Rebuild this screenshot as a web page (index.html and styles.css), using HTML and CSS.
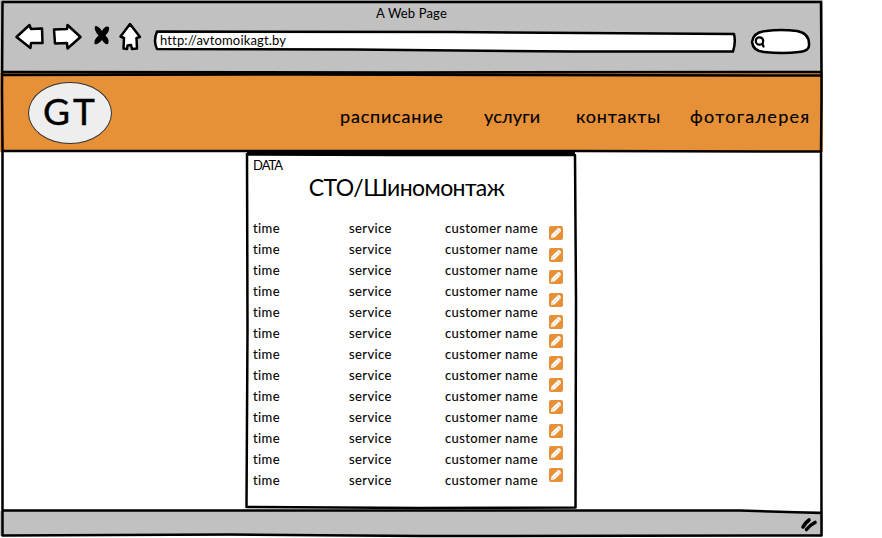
FILE: index.html
```html
<!DOCTYPE html>
<html lang="ru">
<head>
<meta charset="utf-8">
<title>A Web Page</title>
<link rel="stylesheet" href="styles.css">
</head>
<body>
<div class="window">
  <header class="chrome">
    <div class="title">A Web Page</div>
    <div class="toolbar">
      <svg class="tools" width="130" height="34" viewBox="0 0 130 34">
        <g class="ink paper">
          <path d="M2.500 15 L15.500 3 L17 7 L28 6.500 L28.500 21 L17 21 L16.500 26 Z"/>
          <path d="M66.500 15 L53.500 3 L53 7 L40 7.500 L41 21.500 L53 21 L53.500 26.500 Z"/>
          <path d="M116 2 L106.500 14.500 L110 16 L109.500 26.500 L113 27 L113.500 23.500 L117 23 L118 27 L123 26.500 L122.500 16 L126 15 Z"/>
        </g>
        <path class="blob" d="M81 4 Q85 4 88 9 Q91 3 95 5 Q96 9 91.500 13.500 Q96 18 94 22 Q91 23 88 18 Q84 23 80.500 22 Q79.500 18 84.500 13.500 Q79.500 8 81 4Z"/>
      </svg>
      <div class="address">
        <svg class="shape" width="584" height="24" viewBox="0 0 584 24"><path class="ink paper" d="M4 2.500 L300 3 L581 5 Q583 13 580 22.500 L420 22.500 L200 20.500 L4 20 Q0 12 4 2.500Z"/></svg>
        <span class="url">http://avtomoikagt.by</span>
      </div>
      <svg class="search" width="62" height="28" viewBox="0 0 62 28">
        <path class="ink paper" d="M3 15 Q4 5 17 4 Q32 2 48 4 Q60 6 60 17 Q61 24 50 25 Q34 27 15 25 Q4 24 3 15Z"/>
        <circle class="lens" cx="10.500" cy="14" r="3.700"/>
        <path class="lens" d="M13.500 17 L14.500 19.500"/>
      </svg>
    </div>
  </header>

  <nav class="nav">
    <div class="logo"><span>GT</span></div>
    <span class="link schedule">расписание</span>
    <span class="link services">услуги</span>
    <span class="link contacts">контакты</span>
    <span class="link gallery">фотогалерея</span>
  </nav>

  <main class="page">
    <section class="card">
      <div class="label">DATA</div>
      <h1>СТО/Шиномонтаж</h1>
      <div class="schedule-list">
        <div class="rows" id="rows"></div>
        <div class="edits" id="edits"></div>
      </div>
    </section>
  </main>

  <footer class="status">
    <svg width="18" height="16" viewBox="0 0 18 16"><path class="grip" d="M3 10 Q5 6 9 3 M6.500 12.500 Q10 8 15 5.500"/></svg>
  </footer>

  <svg class="frame" width="826" height="538" viewBox="0 0 826 538">
    <path class="line" d="M2.500 2 L821 2 L821.500 75 L821.500 100 L821 152 L821.500 535.500 L420 536 L230 534.500 L2.500 535.500 L2.500 150 L2 90 Z"/>
    <path class="line" d="M2 72 L400 72.500 L821 72 M2 75 L300 74.500 L821 75.500"/>
    <path class="line" d="M2 151 L260 151 L580 151 L821 151.500"/>
    <path class="line" d="M2 510.500 L270 510.500 L740 510.500 L821 513"/>
    <path class="line" d="M247 153 L247.500 330 L246.500 507 L420 508 L575.500 507.500 L576 300 L575 155 L400 155 L247 154.500 M247 153 L575 153"/>
  </svg>
</div>
<script src="script.js"></script>
</body>
</html>
```
FILE: styles.css
```css
body {
  margin: 0;
  background: #fff;
  color: #000;
  font-family: Lato, "Noto Sans", sans-serif;
  overflow: hidden;
}
.window {
  position: relative;
  display: flex;
  flex-direction: column;
  width: 823px;
  height: 538px;
}
.frame {
  position: absolute;
  inset: 0;
  pointer-events: none;
}
.line { fill: none; stroke: #000; stroke-width: 2.5; stroke-linejoin: round; }
.ink { stroke: #000; stroke-width: 2.5; stroke-linejoin: round; }
.paper { fill: #fff; }
.blob { fill: #000; }
.lens { fill: none; stroke: #000; stroke-width: 2.2; stroke-linecap: round; }
.grip { fill: none; stroke: #000; stroke-width: 3.6; stroke-linecap: round; }

.chrome {
  box-sizing: border-box;
  height: 73px;
  padding-top: 5px;
  background: #c1c1c1;
}
.title {
  height: 17px;
  line-height: 17px;
  font-size: 13px;
  text-align: center;
  letter-spacing: 0.15px;
}
.toolbar { display: flex; align-items: flex-start; padding-left: 14px; }
.tools { margin-right: 9px; }
.address { position: relative; width: 584px; height: 24px; margin-top: 7px; }
.shape { position: absolute; inset: 0; }
.url {
  position: relative;
  display: block;
  padding-left: 7px;
  line-height: 23px;
  font-size: 13px;
  letter-spacing: 0.15px;
}
.search { margin: 5px 0 0 12px; }

.nav {
  display: flex;
  box-sizing: border-box;
  height: 79px;
  padding: 9px 0 0 28px;
  background: #e69138;
}
.logo {
  box-sizing: border-box;
  width: 84px;
  height: 62px;
  border: 1.5px solid #333;
  border-radius: 50%;
  background: #eee;
  text-align: center;
  font-size: 37px;
  line-height: 55px;
  letter-spacing: 3px;
  -webkit-text-stroke: 0.4px #000;
}
.logo span { margin-right: -1px; }
.link {
  font-size: 18px;
  line-height: 26px;
  padding-top: 21px;
  white-space: nowrap;
  letter-spacing: 0.8px;
  -webkit-text-stroke: 0.15px #000;
}
.schedule { width: 144px; margin-left: 228px; }
.services { width: 92px; letter-spacing: 0.2px; }
.contacts { width: 114px; }
.gallery { letter-spacing: 1.3px; }

.page { height: 359px; display: flex; padding-left: 246px; }
.card { width: 330px; height: 357px; }
.label { padding: 5px 0 0 7px; font-size: 13px; line-height: 17px; letter-spacing: -1px; }
h1 {
  margin: -1px 0 17px;
  padding-right: 9px;
  text-align: center;
  font-size: 23px;
  line-height: 28px;
  font-weight: 400;
  letter-spacing: -0.6px;
}
.schedule-list { display: flex; padding-left: 7px; }
.rows { width: 296px; }
.row {
  display: grid;
  grid-template-columns: 96px 96px 1fr;
  height: 21px;
  line-height: 21px;
  font-size: 13px;
  letter-spacing: 0.4px;
  -webkit-text-stroke: 0.1px #000;
}
.edits { display: flex; flex-direction: column; gap: 8px; padding-top: 8px; }
.edit { display: block; width: 14px; height: 14px; }
.edit:nth-child(4) { margin-top: 1px; }
.edit:nth-child(6) { margin-top: -3px; }
.edit:nth-child(10) { margin-top: 2px; }
.tile { fill: #e69138; }
.pencil { fill: #fff; }
.groove { stroke: #e69138; stroke-width: 0.5; fill: none; }

.status {
  display: flex;
  justify-content: flex-end;
  box-sizing: border-box;
  height: 25px;
  padding: 6px 5px 0 0;
  background: #c1c1c1;
}
```
FILE: script.js
```js
const row = '<div class="row"><span>time</span><span>service</span><span>customer name</span></div>';
const edit = '<svg class="edit" viewBox="0 0 14 14"><rect class="tile" width="14" height="14" rx="2"/>' +
  '<path class="pencil" d="M2 12 L2.500 8.500 L8.500 2.500 Q9.800 1.500 11.200 2.800 Q12.500 4.200 11.500 5.500 L5.500 11.500Z"/>' +
  '<path class="groove" d="M8 3.200 L10.800 6 M4.800 9.300 L8 6.100 M2.800 9.500 L4.500 11.200"/></svg>';
document.getElementById('rows').innerHTML = row.repeat(13);
document.getElementById('edits').innerHTML = edit.repeat(12);
```
